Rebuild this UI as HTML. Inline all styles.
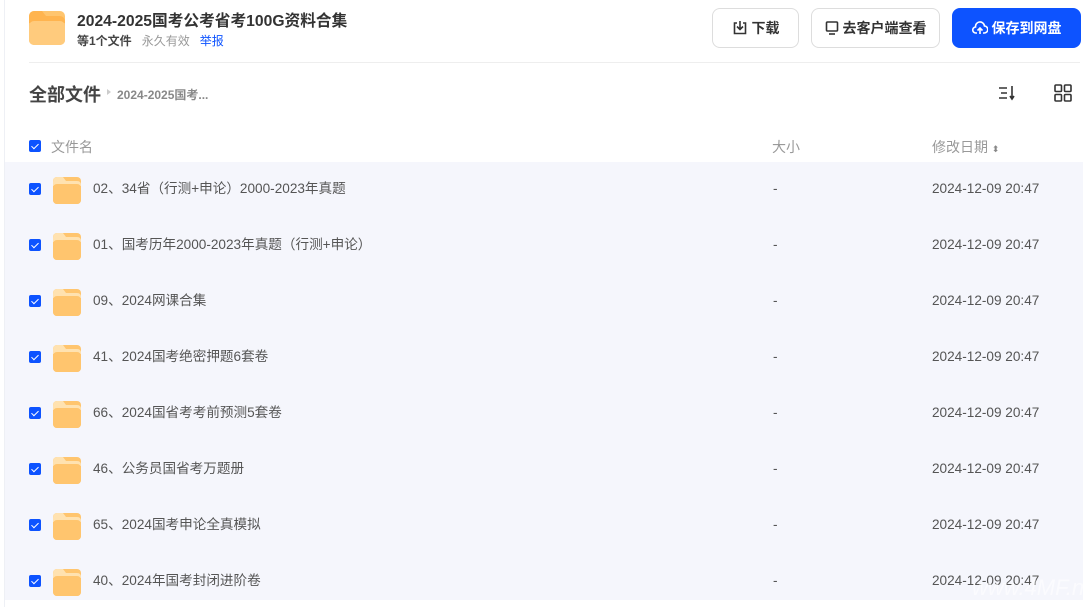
<!DOCTYPE html><html><head><meta charset="utf-8"><style>
*{margin:0;padding:0;box-sizing:border-box}
body{width:1085px;height:607px;background:#fff;font-family:"Liberation Sans","Noto Sans CJK SC",sans-serif;position:relative;overflow:hidden;color:#333}
.a{position:absolute}
.lb{left:4px;top:0;width:1px;height:607px;background:#eef0f5}
.btn{position:absolute;top:8px;height:40px;border:1px solid #ddd;border-radius:8px;font-size:14px;font-weight:bold;color:#333;display:flex;align-items:center;justify-content:center;gap:4px}
.cb{position:absolute;width:12px;height:12px;background:#0d53ff;border-radius:2px}
.cb:after{content:"";position:absolute;left:4px;top:1.5px;width:3px;height:6px;border:solid #fff;border-width:0 1.6px 1.6px 0;transform:rotate(45deg)}
.row{position:absolute;left:5px;width:1078px;height:56px;font-size:13.6px;color:#555}
.row span{position:absolute;top:17px;height:20px;line-height:20px;display:flex;align-items:center}
</style></head><body>
<div class="a lb"></div>
<svg class="a" style="left:29px;top:11px" width="36" height="34" viewBox="0 0 36 34"><rect x="0" y="0" width="36" height="34" rx="5" fill="#ffc56e"/><path d="M0 6 Q0 0 6 0 H13 L17 5 H30 Q36 5 36 11 V12 H0Z" fill="#ffb44f"/><rect x="0" y="10" width="36" height="24" rx="5" fill="#ffcb7d"/></svg>
<div class="a" style="left:77px;top:8px;font-size:15.7px;font-weight:bold;color:#333">2024-2025国考公考省考100G资料合集</div>
<div class="a" style="left:77px;top:32px;font-size:12px"><b style="color:#444">等1个文件</b><span style="color:#999;margin-left:10px">永久有效</span><span style="color:#0d53ff;margin-left:10px">举报</span></div>
<div class="btn" style="left:712px;width:87px"><svg width="16" height="16" viewBox="0 0 16 16" fill="none" stroke="#333" stroke-width="1.6"><path d="M5 3H2.5v10.5h11V3H11M8 1v8M5 6.5l3 3 3-3"/></svg>下载</div>
<div class="btn" style="left:811px;width:129px"><svg width="14" height="16" viewBox="0 0 14 16" fill="none" stroke="#333" stroke-width="1.6"><rect x="1.5" y="2" width="11" height="9" rx="1"/><path d="M4 14h6"/></svg>去客户端查看</div>
<div class="btn" style="left:952px;width:129px;background:#0d53ff;border-color:#0d53ff;color:#fff"><svg width="16" height="16" viewBox="0 0 16 16" fill="none" stroke="#fff" stroke-width="1.6"><path d="M5 13H4a3 3 0 0 1-.5-6A4.5 4.5 0 0 1 12.5 6 3.5 3.5 0 0 1 12 13h-1M8 14V8M5.5 10.5 8 8l2.5 2.5"/></svg>保存到网盘</div>
<div class="a" style="left:29px;top:62px;width:1051px;height:1px;background:#eee"></div>
<div class="a" style="left:29px;top:81px;font-size:18px;font-weight:bold;color:#444">全部文件</div>
<div class="a" style="left:107px;top:89px;width:0;height:0;border-left:4px solid #ccc;border-top:3px solid transparent;border-bottom:3px solid transparent"></div>
<div class="a" style="left:117px;top:86px;font-size:12px;font-weight:bold;color:#888">2024-2025国考...</div>
<svg class="a" style="left:998px;top:85px" width="20" height="16" viewBox="0 0 20 16" fill="none" stroke="#333" stroke-width="1.6"><path d="M1 3h8M3 8h6M1 13h8M14 1v13M12 11l2 3 2-3"/></svg>
<svg class="a" style="left:1054px;top:84px" width="18" height="18" viewBox="0 0 18 18" fill="none" stroke="#333" stroke-width="1.6"><rect x="1" y="1" width="6.5" height="6.5" rx="1"/><rect x="10.5" y="1" width="6.5" height="6.5" rx="1"/><rect x="1" y="10.5" width="6.5" height="6.5" rx="1"/><rect x="10.5" y="10.5" width="6.5" height="6.5" rx="1"/></svg>
<div class="cb" style="left:29px;top:140px"></div>
<div class="a" style="left:51px;top:137px;font-size:14px;color:#999">文件名</div>
<div class="a" style="left:772px;top:137px;font-size:14px;color:#999">大小</div>
<div class="a" style="left:932px;top:137px;font-size:14px;color:#999">修改日期 <span style="font-size:9px;color:#888">⬍</span></div>
<div class="a" style="left:5px;top:162px;width:1078px;height:438px;background:#f5f6fc"></div>
<div id="rows"></div>
<script>
var n=["02、34省（行测+申论）2000-2023年真题","01、国考历年2000-2023年真题（行测+申论）","09、2024网课合集","41、2024国考绝密押题6套卷","66、2024国省考考前预测5套卷","46、公务员国省考万题册","65、2024国考申论全真模拟","40、2024年国考封闭进阶卷"];
var h="";n.forEach(function(t,i){var y=162+i*56;h+='<div class="row" style="top:'+y+'px"><div class="cb" style="left:24px;top:21px"></div><svg style="position:absolute;left:48px;top:15px" width="28" height="27" viewBox="0 0 28 27"><rect width="28" height="27" rx="4" fill="#ffc56e"/><path d="M0 5Q0 0 4 0H10L13 4H24Q28 4 28 8V9H0Z" fill="#ffe2b0"/><rect y="7" width="28" height="20" rx="4" fill="#ffc56e"/></svg><span style="left:88px">'+t+'</span><span style="left:768px">-</span><span style="left:927px">2024-12-09 20:47</span></div>'});
document.getElementById("rows").innerHTML=h;
</script>
<div class="a" style="left:972px;top:575px;font-size:22px;color:rgba(255,255,255,.6);font-style:italic">www.4MF.net</div>
</body></html>
